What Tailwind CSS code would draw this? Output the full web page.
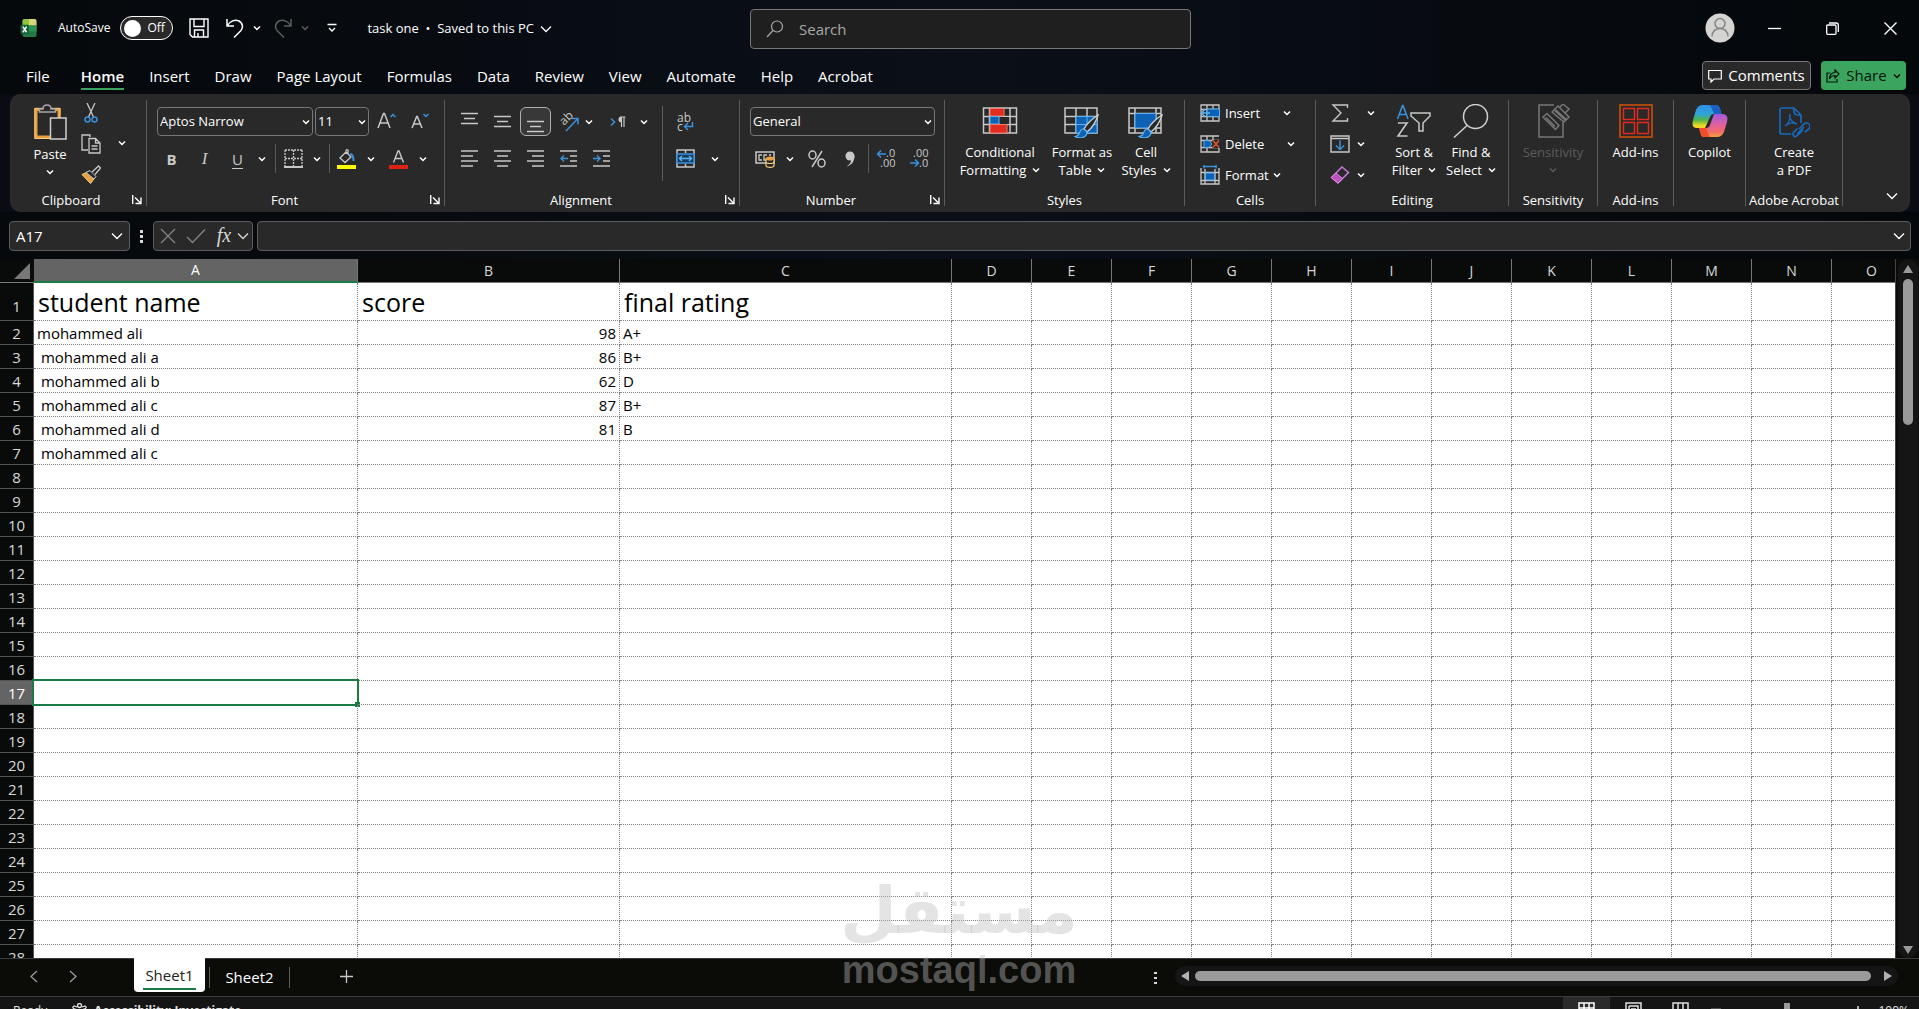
<!DOCTYPE html>
<html lang="en">
<head>
    <meta charset="UTF-8">
    <meta name="viewport" content="width=device-width, initial-scale=1.0">
    <title>task one - Excel</title>
    <script src="https://cdn.jsdelivr.net/npm/@tailwindcss/browser@4"></script>
</head>
<body class="h-screen overflow-hidden bg-[#090d13] font-['Open_Sans','Noto_Sans',sans-serif] text-[13px] text-white">

    <!-- Shared icons -->
    <svg class="hidden">
        <symbol id="chev" viewBox="0 0 8 8"><path d="M1 2.5 4 5.5 7 2.5" fill="none" stroke="currentColor" stroke-width="1.5"/></symbol>
        <symbol id="chev-lg" viewBox="0 0 12 12"><path d="M1 3.5 6 8.5 11 3.5" fill="none" stroke="currentColor" stroke-width="1.3"/></symbol>
        <symbol id="launch" viewBox="0 0 10 10"><path d="M.7 0V9M3 2.5 8 7.5M9 2.5V8.5H3.5" fill="none" stroke="currentColor" stroke-width="1.4"/></symbol>
        <symbol id="brush" viewBox="0 0 26 26"><path d="M24 1C18 5 12 11 10 15l3 3C18 14 22 8 24 1z" fill="#292929" stroke="#d0d0d0" stroke-width="1.4"/><path d="M10 15c-4 0-4 3-5 5-.5 1.500-2 2-4 2.500 4 2.500 12 2 12-4.500z" fill="#0d62b8" stroke="#5fb2ee" stroke-width="1.2"/></symbol>
    </svg>

    <div class="flex h-[calc(100vh+15px)] flex-col">

        <!-- Title bar -->
        <header class="grid h-[56px] shrink-0 grid-cols-[750px_441px_1fr] bg-linear-to-r from-[#05090c] via-[#0b0f18] to-[#04080b]">
            <div class="flex items-center pl-5">
                <svg class="size-[18px]" viewBox="0 0 18 19"><path d="M4 0H9V9H2V2Q2 0 4 0z" fill="#8cc63f"/><path d="M9 0H15Q17 0 17 2V7H9z" fill="#d8d67a"/><path d="M2 7H17V17Q17 19 15 19H4Q2 19 2 17z" fill="#1f7a45"/><path d="M9 7H17V13H9z" fill="#2b9355"/><rect y="6" width="9" height="10" rx="1.500" fill="#15603a"/><path d="M2.500 8 6.500 14M6.500 8 2.500 14" stroke="#fff" stroke-width="1.600"/></svg>
                <label for="autosave" class="ml-5 text-[12px]">AutoSave</label>
                <span class="relative ml-[10px] flex h-6 w-[53px] items-center">
                    <input id="autosave" type="checkbox" class="absolute inset-0 appearance-none rounded-full border border-white bg-[#292929]">
                    <span class="pointer-events-none relative ml-1 size-[17px] rounded-full bg-white"></span>
                    <span class="pointer-events-none relative ml-1.5 text-[12px]">Off</span>
                </span>
                <button aria-label="Save" class="ml-4"><svg class="size-5" viewBox="0 0 20 20" fill="none" stroke="#fff" stroke-width="1.400"><path d="M1 1H19V19H3.500L1 16.500zM5 1V8.500H15V1M5.500 19V12H14.500V19M9 15V19"/></svg></button>
                <button aria-label="Undo" class="ml-4"><svg class="size-5" viewBox="0 0 20 20" fill="none" stroke="#fff" stroke-width="1.500"><path d="M2 1V8H9M2 8C5 3 10 1 14 3c4 2 4.500 7 1.500 10L9 19.500"/></svg></button>
                <button aria-label="Undo options" class="ml-2"><svg class="size-2"><use href="#chev"/></svg></button>
                <button aria-label="Redo" class="ml-3 text-[#5c5c5c]"><svg class="size-5" viewBox="0 0 20 20" fill="none" stroke="currentColor" stroke-width="1.500"><path d="M18 1V8H11M18 8C15 3 10 1 6 3 2 5 1.500 10 4.500 13L11 19.500"/></svg></button>
                <button aria-label="Redo options" class="ml-2 text-[#5c5c5c]"><svg class="size-2"><use href="#chev"/></svg></button>
                <button aria-label="Customize toolbar" class="ml-[18px]"><svg class="size-[10px]" viewBox="0 0 10 10" fill="none" stroke="#fff" stroke-width="1.400"><path d="M.5 1.500H9.500M2 5 5 8 8 5"/></svg></button>
                <button class="mt-0.5 ml-[30px] flex items-center gap-1.5">task one&nbsp; •&nbsp; Saved to this PC <svg class="size-3"><use href="#chev-lg"/></svg></button>
            </div>
            <div class="mt-[9px] flex h-10 items-center gap-[15px] rounded border border-[#777] bg-[#1f1f1f] px-[15px]">
                <svg class="size-[18px] shrink-0" viewBox="0 0 18 18" fill="none" stroke="#aaa" stroke-width="1.200"><circle cx="11" cy="6.500" r="5.500"/><path d="M7 10.500 1 17"/></svg>
                <input type="text" aria-label="Search" placeholder="Search" class="w-full bg-transparent text-[15px] outline-none placeholder:text-[#a8a8a8]">
            </div>
            <div class="flex items-center justify-end pr-[22px]">
                <button aria-label="Account"><svg class="size-[30px]" viewBox="0 0 30 30" fill="none" stroke="#858585" stroke-width="1.500"><circle cx="15" cy="15" r="14.500" fill="#d4d4d2" stroke="none"/><circle cx="15" cy="10.500" r="5"/><path d="M7 23.500c0-5 3.500-8 8-8s8 3 8 8"/></svg></button>
                <button aria-label="Minimize" class="ml-[33px]"><svg class="size-[13px]" viewBox="0 0 13 13"><path d="M0 6.500H13" stroke="#fff" stroke-width="1.300"/></svg></button>
                <button aria-label="Restore" class="ml-[45px]"><svg class="size-[13px]" viewBox="0 0 13 13" fill="none" stroke="#fff" stroke-width="1.300"><rect x=".7" y="3" width="9.300" height="9.300" rx="1"/><path d="M3 1H10Q12.300 1 12.300 3V10"/></svg></button>
                <button aria-label="Close" class="ml-[45px]"><svg class="size-[13px]" viewBox="0 0 13 13"><path d="M.5.5 12.500 12.500M12.500.5.5 12.500" stroke="#fff" stroke-width="1.400"/></svg></button>
            </div>
        </header>

        <!-- Ribbon tabs -->
        <nav class="flex h-[38px] shrink-0 items-start justify-between bg-linear-to-r from-[#05090c] via-[#0b0f18] to-[#04080b] pr-[13px] pl-[26px] text-[15px]">
            <div class="flex gap-[25px] pt-2 leading-6">
                <a href="#" class="mr-1.5">File</a>
                <a href="#" class="flex flex-col font-semibold">Home<span class="h-0.5 bg-[#3ba55f]"></span></a>
                <a href="#">Insert</a>
                <a href="#">Draw</a>
                <a href="#">Page Layout</a>
                <a href="#">Formulas</a>
                <a href="#">Data</a>
                <a href="#">Review</a>
                <a href="#">View</a>
                <a href="#">Automate</a>
                <a href="#">Help</a>
                <a href="#">Acrobat</a>
            </div>
            <div class="flex gap-[10px] pt-[5px]">
                <button class="flex h-[29px] w-[109px] items-center justify-center gap-1.5 rounded border border-[#777] bg-[#292929]"><svg class="size-[14px]" viewBox="0 0 14 14" fill="none" stroke="#fff" stroke-width="1.200"><path d="M.7 1.500H13.300V10H6L3 13V10H.7z"/></svg>Comments</button>
                <button class="flex h-[29px] w-[85px] items-center justify-center gap-1.5 rounded bg-[#3ba55f] text-[#06140b]"><svg class="size-[14px]" viewBox="0 0 14 14" fill="none" stroke="currentColor" stroke-width="1.200"><path d="M4 4H1V13H11V10M9 1 13 5 9 9V6.500C6 6.500 4.500 8 3.500 10 3.500 6 5.500 3.500 9 3.500z"/></svg>Share<svg class="size-2"><use href="#chev"/></svg></button>
            </div>
        </nav>

        <!-- Ribbon -->
        <div class="mr-[9px] ml-[10px] flex h-[118px] shrink-0 rounded-[10px] bg-[#292929] py-1.5 leading-[18px]">

            <section class="flex w-[137px] flex-col justify-between border-r border-[#5c5c5c]">
                <div class="flex pl-4">
                    <button class="flex w-12 flex-col items-center pt-1">
                        <svg class="h-[36px] w-[33px]" viewBox="0 0 33 36" fill="none"><path d="M2 5.500H25V33H2z" stroke="#e9a03f" stroke-width="3"/><path d="M.8 4.300H26V34.500H.8z" stroke="#f5cd82" stroke-width="1"/><path d="M5.500 8H21.500V5H17Q17 1 13 1T9 5H5.500z" fill="#292929" stroke="#a8a8a8" stroke-width="1.500"/><path d="M16.500 14H32V35H16.500z" fill="#292929" stroke="#d0d0d0" stroke-width="1.500"/></svg>
                        <span class="mt-[5px]">Paste</span>
                        <svg class="mt-[5px] size-2"><use href="#chev"/></svg>
                    </button>
                    <div class="ml-[5px] flex w-6 flex-col items-center gap-[11px] pt-[3px]">
                        <button aria-label="Cut"><svg class="h-5 w-[14px]" viewBox="0 0 14 20" fill="none" stroke="#c8c8c8" stroke-width="1.300"><path d="M3 0 9.500 14M11 0 4.500 14"/><g stroke="#3a90da" stroke-width="1.500"><circle cx="3.500" cy="16.500" r="2.500"/><circle cx="10.500" cy="16.500" r="2.500"/></g></svg></button>
                        <button aria-label="Copy"><svg class="size-5" viewBox="0 0 20 20" fill="none" stroke="#c8c8c8" stroke-width="1.300"><path d="M7 16H1V1H9V3M8 4.500H14.500L19 9V19H8zM14.500 4.500V9H19M10.500 12H16.500M10.500 15H16.500"/></svg></button>
                        <button aria-label="Format Painter"><svg class="size-5" viewBox="0 0 20 20"><path d="M1 9.500 8.500 6 14.500 12 9.500 18.500z" fill="#e9a03f" stroke="#f5cd82"/><path d="M5 7.500 9 5.500 15 11.500 13 14z" fill="#292929" stroke="#c8c8c8"/><path d="M11 7 17.500 1 19.500 3 14 9.500" fill="#292929" stroke="#c8c8c8" stroke-width="1.300"/></svg></button>
                    </div>
                    <button aria-label="Copy options" class="ml-[15px]"><svg class="size-2"><use href="#chev"/></svg></button>
                </div>
                <div class="flex h-3 items-center"><span class="flex-1 text-center">Clipboard</span><button aria-label="Clipboard settings" class="mr-1"><svg class="size-[10px]"><use href="#launch"/></svg></button></div>
            </section>

            <section class="flex w-[298px] flex-col justify-between border-r border-[#5c5c5c]">
                <div class="flex flex-col gap-2 pt-[7px] pl-2">
                    <div class="flex items-center pl-0.5">
                        <div class="relative mr-0.5 h-[29px] w-[156px]">
                            <select aria-label="Font" class="size-full appearance-none rounded border border-[#777] bg-[#292929] pb-0.5 pl-0.5"><option>Aptos Narrow</option></select>
                            <svg class="pointer-events-none absolute top-[11px] right-[3px] size-2"><use href="#chev"/></svg>
                        </div>
                        <div class="relative h-[29px] w-[54px]">
                            <select aria-label="Font size" class="size-full appearance-none rounded border border-[#777] bg-[#292929] pb-0.5 pl-0.5"><option>11</option></select>
                            <svg class="pointer-events-none absolute top-[11px] right-[3px] size-2"><use href="#chev"/></svg>
                        </div>
                        <button aria-label="Increase font size" class="ml-2"><svg class="size-5" viewBox="0 0 20 20" fill="none" stroke="#c8c8c8" stroke-width="1.500"><path d="M1 16 6.500 1.500H7.500L13 16M3 11H11"/><path d="M13.500 5 16 2.500 18.500 5" stroke="#3a90da"/></svg></button>
                        <button aria-label="Decrease font size" class="ml-[14px]"><svg class="size-5" viewBox="0 0 20 20" fill="none" stroke="#c8c8c8" stroke-width="1.500"><path d="M1 16 5.700 4.500H6.300L11 16M3 12H9"/><path d="M12.500 2 15 4.500 17.500 2" stroke="#3a90da"/></svg></button>
                    </div>
                    <div class="flex h-[29px] items-center text-[#c8c8c8]">
                        <button class="w-[33px] text-[15px] font-bold">B</button>
                        <button class="w-[33px] font-['Liberation_Serif',serif] text-[17px] italic">I</button>
                        <button class="w-[33px] text-[15px] underline underline-offset-3">U</button>
                        <button aria-label="Underline options" class="flex w-4 justify-center text-white"><svg class="size-2"><use href="#chev"/></svg></button>
                        <span class="mx-[5px] h-full w-px bg-[#5c5c5c]"></span>
                        <button aria-label="Borders" class="flex w-6 justify-center"><svg class="size-[19px]" viewBox="0 0 19 19" fill="none" stroke="#c8c8c8" stroke-width="1.300"><path d="M1 1H18M1 9.500H18M1 1V17M9.500 1V17M18 1V17" stroke-dasharray="2 1"/><path d="M0 18H19" stroke-width="2"/></svg></button>
                        <button aria-label="Border options" class="flex w-6 justify-center text-white"><svg class="size-2"><use href="#chev"/></svg></button>
                        <span class="h-full w-px bg-[#5c5c5c]"></span>
                        <button aria-label="Fill color" class="flex w-8 justify-center"><svg class="h-5 w-[19px]" viewBox="0 0 19 20"><path d="M3 9 9 3 14 8 8 13.500zM9 5V2Q9 0 11 1V5" fill="none" stroke="#c8c8c8" stroke-width="1.300"/><path d="M13 5Q16.500 5 16.500 12" fill="none" stroke="#3a90da" stroke-width="2"/><path d="M0 16H19V20H0z" fill="#ff0"/></svg></button>
                        <button aria-label="Fill color options" class="flex w-[18px] justify-center text-white"><svg class="size-2"><use href="#chev"/></svg></button>
                        <button aria-label="Font color" class="flex w-9 justify-center"><svg class="h-5 w-[19px]" viewBox="0 0 19 20"><path d="M4.500 13.500 9 2H10L14.500 13.500M6.500 9.500H12.500" fill="none" stroke="#c8c8c8" stroke-width="1.400"/><path d="M0 16H19V20H0z" fill="#dd2211"/></svg></button>
                        <button aria-label="Font color options" class="flex w-[14px] justify-center text-white"><svg class="size-2"><use href="#chev"/></svg></button>
                    </div>
                </div>
                <div class="flex h-3 items-center"><span class="flex-1 pr-2 text-center">Font</span><button aria-label="Font settings" class="mr-1"><svg class="size-[10px]"><use href="#launch"/></svg></button></div>
            </section>

            <section class="flex w-[295px] flex-col justify-between border-r border-[#5c5c5c]">
                <div class="flex pl-2 text-[#c8c8c8]">
                    <div class="flex flex-col gap-2 pt-[7px]">
                        <div class="flex h-[29px] items-center">
                            <button aria-label="Top align" class="flex w-[33px] justify-center"><svg class="h-[22px] w-[17px]" viewBox="0 0 17 22" stroke="currentColor" stroke-width="1.500"><path d="M0 2.500H17M3 7.500H14M0 12.500H17"/></svg></button>
                            <button aria-label="Middle align" class="flex w-[33px] justify-center"><svg class="h-[22px] w-[17px]" viewBox="0 0 17 22" stroke="currentColor" stroke-width="1.500"><path d="M0 5.500H17M3 10.500H14M0 15.500H17"/></svg></button>
                            <button aria-label="Bottom align" class="mx-px flex h-[29px] w-[31px] items-center justify-center rounded-md border border-[#b0b0b0] bg-[#383838]"><svg class="h-[22px] w-[17px]" viewBox="0 0 17 22" stroke="currentColor" stroke-width="1.500"><path d="M0 10.500H17M3 15.500H14M0 20.500H17"/></svg></button>
                            <button aria-label="Orientation" class="flex w-[33px] justify-center"><svg class="h-[22px] w-5 overflow-visible" viewBox="0 0 20 22" fill="none"><text transform="translate(5 15) rotate(-45)" font-size="12" fill="#c8c8c8">ab</text><path d="M7 20 18.500 8M13 7.500H19V13.500" stroke="#3a90da" stroke-width="1.500"/></svg></button>
                            <button aria-label="Orientation options" class="text-white"><svg class="size-2"><use href="#chev"/></svg></button>
                            <button aria-label="Text direction" class="ml-3 flex w-7 items-center"><svg class="ml-[5px] size-4" viewBox="0 0 16 16" fill="none"><path d="M1 4.500 4.500 8 1 11.500" stroke="#3a90da" stroke-width="1.600"/><path d="M11.500 3V13M14 3V13M15.500 3H10.500" stroke="#c8c8c8" stroke-width="1.200"/><path d="M11.500 2.500A3 3 0 0 0 11.500 8.500z" fill="#c8c8c8"/></svg></button>
                            <button aria-label="Text direction options" class="ml-[7px] text-white"><svg class="size-2"><use href="#chev"/></svg></button>
                        </div>
                        <div class="flex h-[29px] items-center">
                            <button aria-label="Align left" class="flex w-[33px] justify-center"><svg class="size-[17px]" viewBox="0 0 17 17" stroke="currentColor" stroke-width="1.500"><path d="M0 1H17M0 6H12M0 11H17M0 16H12"/></svg></button>
                            <button aria-label="Center" class="flex w-[33px] justify-center"><svg class="size-[17px]" viewBox="0 0 17 17" stroke="currentColor" stroke-width="1.500"><path d="M0 1H17M3 6H14M0 11H17M3 16H14"/></svg></button>
                            <button aria-label="Align right" class="flex w-[33px] justify-center"><svg class="size-[17px]" viewBox="0 0 17 17" stroke="currentColor" stroke-width="1.500"><path d="M0 1H17M5 6H17M0 11H17M5 16H17"/></svg></button>
                            <button aria-label="Decrease indent" class="flex w-[33px] justify-center"><svg class="size-[17px]" viewBox="0 0 17 17" fill="none" stroke="currentColor" stroke-width="1.500"><path d="M0 1H17M10 6H17M10 11H17M0 16H17"/><path d="M8 8.500H1M4 5.500 1 8.500 4 11.500" stroke="#3a90da"/></svg></button>
                            <button aria-label="Increase indent" class="flex w-[33px] justify-center"><svg class="size-[17px]" viewBox="0 0 17 17" fill="none" stroke="currentColor" stroke-width="1.500"><path d="M0 1H17M10 6H17M10 11H17M0 16H17"/><path d="M0 8.500H7M4 5.500 7 8.500 4 11.500" stroke="#3a90da"/></svg></button>
                        </div>
                    </div>
                    <span class="mt-1.5 ml-auto h-[75px] w-px bg-[#5c5c5c]"></span>
                    <div class="flex w-[76px] flex-col gap-2 pt-[7px] pl-[11px]">
                        <button aria-label="Wrap text" class="flex h-[29px] w-7 items-center"><svg class="ml-0.5 size-5 overflow-visible" viewBox="0 0 20 20" fill="none"><text x="1" y="10" font-size="12" fill="#c8c8c8">ab</text><text x="1" y="19" font-size="12" fill="#c8c8c8">c</text><path d="M16.500 10V14.500H9M12 11 8.500 14.500 12 18" stroke="#3a90da" stroke-width="1.500"/></svg></button>
                        <div class="flex h-[29px] items-center">
                            <button aria-label="Merge and center" class="ml-0.5"><svg class="size-[19px]" viewBox="0 0 19 19" fill="none"><path d="M1 1H18V18H1zM9.500 1V4M9.500 15V18" stroke="#c8c8c8" stroke-width="1.500"/><path d="M1 5H18V14H1z" fill="#173e60" stroke="#3a90da" stroke-width="1.500"/><path d="M3 9.500H16M6 7 3.500 9.500 6 12M13 7 15.500 9.500 13 12" stroke="#5fb2ee" stroke-width="1.400"/></svg></button>
                            <button aria-label="Merge options" class="ml-4 text-white"><svg class="size-2"><use href="#chev"/></svg></button>
                        </div>
                    </div>
                </div>
                <div class="flex h-3 items-center"><span class="flex-1 pr-2 text-center">Alignment</span><button aria-label="Alignment settings" class="mr-1"><svg class="size-[10px]"><use href="#launch"/></svg></button></div>
            </section>

            <section class="flex w-[205px] flex-col justify-between border-r border-[#5c5c5c]">
                <div class="flex flex-col gap-2 pt-[7px] pl-[10px]">
                    <div class="relative h-[29px] w-[185px]">
                        <select aria-label="Number format" class="size-full appearance-none rounded border border-[#777] bg-[#292929] pb-0.5 pl-0.5"><option>General</option></select>
                        <svg class="pointer-events-none absolute top-[11px] right-[3px] size-2"><use href="#chev"/></svg>
                    </div>
                    <div class="flex h-[29px] items-center text-[#c8c8c8]">
                        <button aria-label="Accounting format" class="flex w-[30px] justify-center"><svg class="h-[18px] w-5" viewBox="0 0 20 18" fill="none"><path d="M1 2H19V13H1z" stroke="#c8c8c8" stroke-width="1.500"/><path d="M7 5H4V10H7M12 5H9V10H11M16 5H14" stroke="#c8c8c8" stroke-width="1.300"/><path d="M11 8.500V15.500C11 18 19 18 19 15.500V8.500z" fill="#292929" stroke="#f5cd82" stroke-width="1.200"/><path d="M11 12C11 14 19 14 19 12" stroke="#f5cd82" stroke-width="1.200"/><ellipse cx="15" cy="8.500" rx="4" ry="2" fill="#e9a03f"/></svg></button>
                        <button aria-label="Accounting options" class="flex w-5 justify-center text-white"><svg class="size-2"><use href="#chev"/></svg></button>
                        <button aria-label="Percent" class="flex w-[34px] justify-center"><svg class="size-[18px]" viewBox="0 0 18 18" fill="none" stroke="currentColor" stroke-width="1.500"><ellipse cx="4.500" cy="5" rx="3.500" ry="4"/><ellipse cx="13.500" cy="13" rx="3.500" ry="4"/><path d="M14 1 4 17"/></svg></button>
                        <button aria-label="Comma style" class="flex w-8 justify-center"><svg class="size-4" viewBox="0 0 16 16"><circle cx="8" cy="5" r="4.500" fill="currentColor"/><path d="M12.500 5C12.500 11 9 14.500 4.500 15.500 8 13 9.500 11 9 8z" fill="currentColor"/></svg></button>
                        <span class="ml-0.5 h-full w-px bg-[#5c5c5c]"></span>
                        <button aria-label="Increase decimal" class="flex w-[33px] justify-center"><svg class="size-5 overflow-visible" viewBox="0 0 20 20" fill="none"><text x="10" y="8" font-size="11" fill="#c8c8c8">.0</text><text x="4" y="18" font-size="11" fill="#c8c8c8">.00</text><path d="M10 5H1.500M5 1.500 1.500 5 5 8.500" stroke="#3a90da" stroke-width="1.500"/></svg></button>
                        <button aria-label="Decrease decimal" class="flex w-[33px] justify-center"><svg class="size-5 overflow-visible" viewBox="0 0 20 20" fill="none"><text x="4" y="8" font-size="11" fill="#c8c8c8">.00</text><text x="10" y="18" font-size="11" fill="#c8c8c8">.0</text><path d="M1 14H9.500M6 10.500 9.500 14 6 17.500" stroke="#3a90da" stroke-width="1.500"/></svg></button>
                    </div>
                </div>
                <div class="flex h-3 items-center"><span class="flex-1 pr-2 text-center">Number</span><button aria-label="Number settings" class="mr-1"><svg class="size-[10px]"><use href="#launch"/></svg></button></div>
            </section>

            <section class="flex w-[240px] flex-col justify-between border-r border-[#5c5c5c]">
                <div class="flex pt-1 pl-[11px]">
                    <button class="flex w-[88px] flex-col items-center">
                        <svg class="h-[34px] w-[36px]" viewBox="0 0 36 34" fill="none"><path d="M1.500 4H34.500V29H1.500zM1.500 12.500H34.500M1.500 20.500H34.500M7.500 4V29M28 4V29" stroke="#c8c8c8" stroke-width="1.500"/><path d="M8 4.500H22V12H8z" fill="#e02b1d" stroke="#f07a72"/><path d="M8 12.500H17V20H8z" fill="#0d62b8" stroke="#5fb2ee"/><path d="M18 13H27V20H18z" fill="#292929"/><path d="M8 20.500H25V29H8z" fill="#e02b1d" stroke="#f07a72"/></svg>
                        <span class="mt-[5px]">Conditional</span>
                        <span class="flex items-center gap-1.5">Formatting <svg class="size-2"><use href="#chev"/></svg></span>
                    </button>
                    <button class="flex w-[76px] flex-col items-center">
                        <svg class="h-[34px] w-[36px]" viewBox="0 0 36 34" fill="none"><path d="M1 4H33V29H1zM1 12.500H33M1 20.500H33M12 4V29M23 4V29" stroke="#c8c8c8" stroke-width="1.500"/><path d="M12 12.500H33V29H12z" fill="#0d62b8" stroke="#5fb2ee"/><path d="M12 20.500H33M23 12.500V29" stroke="#5fb2ee"/><use href="#brush" x="10" y="10" width="26" height="26"/></svg>
                        <span class="mt-[5px] whitespace-nowrap">Format as</span>
                        <span class="flex items-center gap-1.5">Table <svg class="size-2"><use href="#chev"/></svg></span>
                    </button>
                    <button class="flex w-[52px] flex-col items-center">
                        <svg class="h-[34px] w-[36px]" viewBox="0 0 36 34" fill="none"><path d="M1 4H33V29H1zM1 9.500H33M1 24H33M7 4V29M28 4V29" stroke="#c8c8c8" stroke-width="1.500"/><path d="M7 9.500H28V24H7z" fill="#0d62b8" stroke="#5fb2ee"/><use href="#brush" x="10" y="10" width="26" height="26"/></svg>
                        <span class="mt-[5px]">Cell</span>
                        <span class="flex items-center gap-1.5">Styles <svg class="size-2"><use href="#chev"/></svg></span>
                    </button>
                </div>
                <div class="h-3 text-center leading-3">Styles</div>
            </section>

            <section class="flex w-[131px] flex-col justify-between border-r border-[#5c5c5c]">
                <div class="flex flex-col gap-[11px] pt-[3px] pl-[15px]">
                    <button class="flex h-5 items-center"><svg class="h-[18px] w-5" viewBox="0 0 20 18" fill="none"><path d="M1 1H19V17H1zM1 5.500H19M1 12.500H19M7 1V17M13 1V17" stroke="#c8c8c8" stroke-width="1.300"/><path d="M7 5H19.500V12.500H7z" fill="#0d62b8" stroke="#5fb2ee"/><path d="M10 9H1.500M5 5 1.500 9 5 13" stroke="#5fb2ee" stroke-width="1.500"/></svg><span class="w-[60px] pl-[5px] text-left">Insert</span><svg class="ml-[3px] size-2"><use href="#chev"/></svg></button>
                    <button class="flex h-5 items-center"><svg class="h-[18px] w-5" viewBox="0 0 20 18" fill="none"><path d="M12 17H1V1H19M1 5.500H19M1 12.500H19M7 1V17M13 1V5M19 13V17H12" stroke="#c8c8c8" stroke-width="1.300"/><path d="M4 5.500H9L12 9 9 12.500H4z" fill="#0d62b8" stroke="#5fb2ee"/><path d="M12.500 5H20V13H12.500z" fill="#292929"/><path d="M13 5.500 19 12.500M19 5.500 13 12.500" stroke="#e8552d" stroke-width="1.500"/></svg><span class="w-[60px] pl-[5px] text-left">Delete</span><svg class="ml-[7px] size-2"><use href="#chev"/></svg></button>
                    <button class="flex h-5 items-center gap-1"><svg class="size-5" viewBox="0 0 20 20" fill="none"><path d="M1 3V19H19V3M1 7.500H19M1 15.500H19M5 4V19M15 4V19" stroke="#c8c8c8" stroke-width="1.300"/><path d="M5.500 8H14.500V15H5.500z" fill="#0d62b8" stroke="#5fb2ee"/><path d="M3 1.500H17M4 0V3.500M16 0V3.500" stroke="#3a90da" stroke-width="1.400"/></svg><span class="pl-px">Format</span><svg class="size-2"><use href="#chev"/></svg></button>
                </div>
                <div class="h-3 text-center leading-3">Cells</div>
            </section>

            <section class="flex w-[193px] flex-col justify-between border-r border-[#5c5c5c]">
                <div class="flex pl-[14px]">
                    <div class="flex w-[58px] flex-col gap-[11px] pt-[3px]">
                        <div class="flex h-5 items-center gap-[17px]">
                            <button aria-label="AutoSum"><svg class="h-[18px] w-5" viewBox="0 0 20 18" fill="none" stroke="#c8c8c8" stroke-width="1.400"><path d="M17.500 4V1H3L11 9 3 17H17.500V14"/></svg></button>
                            <button aria-label="AutoSum options"><svg class="size-2"><use href="#chev"/></svg></button>
                        </div>
                        <div class="flex h-5 items-center gap-[7px]">
                            <button aria-label="Fill"><svg class="h-[18px] w-5" viewBox="0 0 20 18" fill="none"><path d="M1 1H19V17H1zM1 3.500H19" stroke="#c8c8c8" stroke-width="1.400"/><path d="M10 5.500V14.500M6 10.500 10 14.500 14 10.500" stroke="#3a90da" stroke-width="1.500"/></svg></button>
                            <button aria-label="Fill options"><svg class="size-2"><use href="#chev"/></svg></button>
                        </div>
                        <div class="flex h-5 items-center gap-[7px]">
                            <button aria-label="Clear"><svg class="size-5" viewBox="0 0 20 20" fill="none"><path d="M1.500 12.500 12 2 18.500 7.500 8 18z" stroke="#c678dd" stroke-width="1.500"/><path d="M1.500 12.500 6 8 12.500 13.500 8 18z" fill="#c04fc0" stroke="#d98ae0"/></svg></button>
                            <button aria-label="Clear options"><svg class="size-2"><use href="#chev"/></svg></button>
                        </div>
                    </div>
                    <button class="flex w-[52px] flex-col items-center pt-1">
                        <svg class="h-[34px] w-[36px]" viewBox="0 0 36 34" fill="none"><path d="M1.500 15 6.500 1.500H7L12 15M3.500 10.500H10" stroke="#3a90da" stroke-width="1.600"/><path d="M2 19H11L2 32H11.500" stroke="#c8c8c8" stroke-width="1.600"/><path d="M15 9H34V12L27 19V27H23V19L15 12z" stroke="#c8c8c8" stroke-width="1.500"/></svg>
                        <span class="mt-[5px] whitespace-nowrap">Sort &amp;</span>
                        <span class="flex items-center gap-1.5">Filter <svg class="size-2"><use href="#chev"/></svg></span>
                    </button>
                    <button class="ml-1 flex w-[54px] flex-col items-center pt-1">
                        <svg class="h-[34px] w-[36px]" viewBox="0 0 36 34" fill="none" stroke="#d0d0d0" stroke-width="1.500"><circle cx="22.500" cy="12.500" r="12"/><path d="M14 21.500 1 33.500"/></svg>
                        <span class="mt-[5px] whitespace-nowrap">Find &amp;</span>
                        <span class="flex items-center gap-1.5">Select <svg class="size-2"><use href="#chev"/></svg></span>
                    </button>
                </div>
                <div class="h-3 text-center leading-3">Editing</div>
            </section>

            <section class="flex w-[89px] flex-col justify-between border-r border-[#5c5c5c]">
                <button disabled class="flex flex-col items-center pt-1 text-[#5c5c5c]">
                    <svg class="h-[34px] w-[36px]" viewBox="0 0 36 34" fill="none" stroke="#777" stroke-width="1.500"><path d="M19 1H4V33H28V18"/><path d="M8 13 12 9.500 24 21.500 20.500 25.500zM11 13.500 20 22.500" /><path d="M17 8 23 2 34 13 29 18zM24 4 28 0 34 5 30 9" fill="#292929"/><path d="M20 6 31 16" stroke-width="2.500"/></svg>
                    <span class="mt-[5px]">Sensitivity</span>
                    <svg class="mt-[5px] size-2"><use href="#chev"/></svg>
                </button>
                <div class="h-3 text-center leading-3">Sensitivity</div>
            </section>

            <section class="flex w-[76px] flex-col justify-between border-r border-[#5c5c5c]">
                <button class="flex flex-col items-center pt-1">
                    <svg class="size-[34px]" viewBox="0 0 34 34" fill="none"><path d="M1 1H33V33H1z" stroke="#a8480f" stroke-width="2"/><path d="M4.500 4.500H15.500V15.500H4.500zM18.500 4.500H29.500V15.500H18.500zM4.500 18.500H15.500V29.500H4.500zM18.500 18.500H29.500V29.500H18.500z" stroke="#e02b1d" stroke-width="1.500"/></svg>
                    <span class="mt-[5px]">Add-ins</span>
                </button>
                <div class="h-3 text-center leading-3">Add-ins</div>
            </section>

            <section class="flex w-[72px] flex-col border-r border-[#5c5c5c]">
                <button class="flex flex-col items-center pt-1">
                    <svg class="h-[34px] w-[36px]" viewBox="0 0 36 34">
                        <defs>
                            <linearGradient id="cpA" x1="0" y1="0" x2="0" y2="1"><stop offset="0" stop-color="#2f8fe6"/><stop offset=".4" stop-color="#2fa4d8"/><stop offset=".65" stop-color="#4fb648"/><stop offset=".9" stop-color="#f5d824"/></linearGradient>
                            <linearGradient id="cpB" x1="0" y1="0" x2="0" y2="1"><stop offset="0" stop-color="#a35ae0"/><stop offset=".5" stop-color="#e4609a"/><stop offset=".8" stop-color="#f07060"/><stop offset="1" stop-color="#f0a040"/></linearGradient>
                        </defs>
                        <path d="M17 1H24Q27 1 28 5L29.500 10H22Q19 10 18 13L13 24H5Q-1 24 1 16L4 6Q6 1 11 1z" fill="url(#cpA)"/>
                        <path d="M18 1H24Q27 1 28 5L29.500 10H22L20 5Q19 2 17 1z" fill="#1c5fc4"/>
                        <path d="M19 33H12Q9 33 8.500 29L7 24H14Q17 24 18 21L22 10H30Q37 10 35 18L32 28Q30 33 25 33z" fill="url(#cpB)"/>
                        <path d="M18 33H12Q9 33 8.500 29L7 24H14L16 29Q17 32 18 33z" fill="#f04e2a"/>
                    </svg>
                    <span class="mt-[5px]">Copilot</span>
                </button>
            </section>

            <section class="flex w-[97px] flex-col justify-between border-r border-[#5c5c5c]">
                <button class="flex flex-col items-center pt-1">
                    <svg class="h-[34px] w-[32px]" viewBox="0 0 32 34" fill="none" stroke="#1769bd" stroke-width="1.700"><path d="M13 30H4Q2 30 2 28V6Q2 4 4 4H16L23 11V19M16 4V7Q16 11 20 11H23"/><path d="M7 22C10 20 13 15 12 11 11 9 11 18 19 20 15 18 10 19 7 22z" stroke-width="1.400"/><path d="M21 25 26 20Q29 18 31 20T31 25L27 28M25 26 20 31Q17 34 15.500 31.500T17 27L19.500 24.500M19 30 26 23"/></svg>
                    <span class="mt-[5px]">Create</span>
                    <span>a PDF</span>
                </button>
                <div class="h-3 text-center leading-3 whitespace-nowrap">Adobe Acrobat</div>
            </section>

            <button aria-label="Ribbon display options" class="mb-1 ml-auto flex items-end pr-3"><svg class="size-3"><use href="#chev-lg"/></svg></button>
        </div>

        <!-- Formula bar -->
        <div class="flex h-[47px] shrink-0 items-start bg-linear-to-r from-[#05090c] via-[#0b0f18] to-[#04080b] pt-[9px] pr-2 pl-[9px]">
            <div class="flex h-[30px] w-[121px] items-center rounded border border-[#5c5c5c] bg-[#292929] pr-1.5 pl-1.5">
                <input type="text" aria-label="Name box" value="A17" class="w-full bg-transparent text-[15px] outline-none">
                <svg class="size-3 shrink-0"><use href="#chev-lg"/></svg>
            </div>
            <svg class="mx-[10px] h-[30px] w-[3px]" viewBox="0 0 3 30" fill="#d8d8d8"><path d="M0 9H3V12H0zM0 14H3V17H0zM0 19H3V22H0z"/></svg>
            <div class="flex h-[30px] w-[100px] items-center rounded border border-[#5c5c5c] bg-[#292929] pl-1.5 text-[#d8d8d8]">
                <button aria-label="Cancel"><svg class="size-4" viewBox="0 0 16 16" stroke="#858585" stroke-width="1.300"><path d="M1 1 15 15M15 1 1 15"/></svg></button>
                <button aria-label="Enter" class="ml-[10px]"><svg class="h-4 w-5" viewBox="0 0 20 16" fill="none" stroke="#858585" stroke-width="1.300"><path d="M1 9 6.500 14.500 19 1.500"/></svg></button>
                <button aria-label="Insert function" class="ml-[9px] w-[18px] pb-0.5 font-['Liberation_Serif',serif] text-[20px] leading-5 italic">fx</button>
                <svg class="ml-1 size-3"><use href="#chev-lg"/></svg>
            </div>
            <div class="ml-1 flex h-[30px] flex-1 items-center rounded border border-[#5c5c5c] bg-[#292929] pr-[5px] pl-2">
                <input type="text" aria-label="Formula bar" class="w-full bg-transparent outline-none">
                <svg class="size-3 shrink-0"><use href="#chev-lg"/></svg>
            </div>
        </div>

        <!-- Worksheet -->
        <main class="flex min-h-0 flex-1 bg-[#0b0b08]">
            <div class="min-w-0 flex-1 overflow-hidden border-r border-[#444] bg-white text-[15px] text-black">
                <table class="w-max table-fixed border-separate border-spacing-0">
                    <colgroup id="cols"></colgroup>
                    <thead><tr id="head"></tr></thead>
                    <tbody id="rows"></tbody>
                </table>
            </div>
            <div class="ml-0.5 flex w-5 flex-col items-center rounded-full bg-[#151515]">
                <svg class="mt-1.5 h-2 w-[10px]" viewBox="0 0 10 8"><path d="M5 0 10 8H0z" fill="#9a9a9a"/></svg>
                <div class="mt-1.5 h-[146px] w-[10px] rounded-full bg-[#9a9a9a]"></div>
                <svg class="mt-auto mb-1 h-2 w-[10px]" viewBox="0 0 10 8"><path d="M5 8 10 0H0z" fill="#9a9a9a"/></svg>
            </div>
            <span class="w-px"></span>
        </main>

        <!-- Sheet tabs -->
        <div class="flex h-[38px] shrink-0 items-start border-t border-[#3c3c3c] bg-[#0b0b08] text-[15px]">
            <button aria-label="Previous sheet" class="mt-[11px] ml-[30px]"><svg class="h-[13px] w-2" viewBox="0 0 8 13" fill="none" stroke="#9a9a9a" stroke-width="1.300"><path d="M7 1 1 6.500 7 12"/></svg></button>
            <button aria-label="Next sheet" class="mt-[11px] ml-[31px]"><svg class="h-[13px] w-2" viewBox="0 0 8 13" fill="none" stroke="#9a9a9a" stroke-width="1.300"><path d="M1 1 7 6.500 1 12"/></svg></button>
            <button class="-mt-px ml-[57px] h-[34px] w-[71px] rounded-b bg-white px-[9px] pt-1 text-[#222]"><span class="block border-b-2 border-[#1a7a43] pb-px">Sheet1</span></button>
            <span class="mt-2 ml-1 h-[21px] w-px bg-[#5c5c5c]"></span>
            <button class="h-9 w-[79px]">Sheet2</button>
            <span class="mt-2 h-[21px] w-px bg-[#5c5c5c]"></span>
            <button aria-label="New sheet" class="mt-[11px] ml-[50px]"><svg class="size-[13px]" viewBox="0 0 13 13" stroke="#c8c8c8" stroke-width="1.300"><path d="M6.500 0V13M0 6.500H13"/></svg></button>
            <svg class="mt-[13px] mr-[18px] ml-auto h-3 w-[3px]" viewBox="0 0 3 12" fill="#d8d8d8"><path d="M0 0H3V2H0zM0 5H3V7H0zM0 10H3V12H0z"/></svg>
            <div class="mt-[7px] mr-[21px] flex h-5 w-[723px] items-center rounded-full bg-[#151515] px-1.5">
                <svg class="h-[10px] w-2" viewBox="0 0 8 10"><path d="M0 5 8 0V10z" fill="#b0b0b0"/></svg>
                <div class="mx-1.5 h-[10px] w-[676px] rounded-full bg-[#9a9a9a]"></div>
                <svg class="ml-auto h-[10px] w-2" viewBox="0 0 8 10"><path d="M8 5 0 0V10z" fill="#b0b0b0"/></svg>
            </div>
        </div>

        <!-- Status bar -->
        <footer class="flex h-7 shrink-0 items-center border-t border-[#3c3c3c] bg-[#151515] pr-[10px] pl-[13px] text-[12px] text-[#e0e0e0]">
            <span class="w-[59px]">Ready</span>
            <svg class="mr-[7px] size-[15px]" viewBox="0 0 15 15" fill="none" stroke="currentColor" stroke-width="1.300"><circle cx="7.500" cy="2.500" r="2"/><path d="M5 4 2 3Q0 4 1.500 5.500L5 7V10L3 14M10 4 13 3Q15 4 13.500 5.500L10 7V10L12 14"/></svg>
            <button class="font-bold">Accessibility: Investigate</button>
            <button aria-label="Normal view" class="ml-auto flex h-full w-[47px] items-center justify-center bg-[#2b2b2b]"><svg class="size-[17px]" viewBox="0 0 17 17" fill="none" stroke="#fff" stroke-width="1.500"><path d="M1 1H16V16H1zM1 6H16M1 11H16M6 1V16M11 1V16"/></svg></button>
            <button aria-label="Page layout view" class="flex w-[47px] justify-center"><svg class="size-[17px]" viewBox="0 0 17 17" fill="none" stroke="#e0e0e0" stroke-width="1.500"><path d="M1 1H16V16H1zM4 4H13V16M4 4V16M6 7H11M6 10H11"/></svg></button>
            <button aria-label="Page break preview" class="flex w-[47px] justify-center"><svg class="size-[17px]" viewBox="0 0 17 17" fill="none" stroke="#e0e0e0" stroke-width="1.500"><path d="M1 1H16V16H1zM6 1V9H1M11 1V9H16"/></svg></button>
            <button aria-label="Zoom out" class="ml-[7px]"><svg class="size-[10px]" viewBox="0 0 10 10"><path d="M0 3.500H10" stroke="#fff" stroke-width="1.500"/></svg></button>
            <input type="range" aria-label="Zoom" class="mx-[9px] h-0.5 w-[114px] appearance-none bg-[#777] [&::-webkit-slider-thumb]:h-4 [&::-webkit-slider-thumb]:w-1.5 [&::-webkit-slider-thumb]:appearance-none [&::-webkit-slider-thumb]:bg-[#9a9a9a]">
            <button aria-label="Zoom in" class="mr-[15px]"><svg class="size-[10px]" viewBox="0 0 10 10"><path d="M5 0V10M0 4H10" stroke="#fff" stroke-width="1.300"/></svg></button>
            <span>100%</span>
        </footer>
    </div>

    <!-- Watermark -->
    <div class="pointer-events-none absolute bottom-4 left-[844px] flex w-[230px] flex-col items-center text-[#bebebe]/42">
        <span lang="ar" dir="rtl" class="font-['DejaVu_Sans',sans-serif] text-[65px] leading-[72px] font-bold">مستقل</span>
        <span class="font-['Liberation_Sans',sans-serif] text-[38px] leading-[46px] font-bold">mostaql.com</span>
    </div>

    <script>
        const letters = 'ABCDEFGHIJKLMNO'.split('');
        const widths = { A: 'w-[324px]', B: 'w-[262px]', C: 'w-[332px]' };
        const data = {
            1: ['student name', 'score', 'final rating'],
            2: ['mohammed ali', '98', 'A+'],
            3: [' mohammed ali a', '86', 'B+'],
            4: [' mohammed ali b', '62', 'D'],
            5: [' mohammed ali c', '87', 'B+'],
            6: [' mohammed ali d', '81', 'B'],
            7: [' mohammed ali c', '', '']
        };
        const active = 17;

        // Column widths and letters
        let cols = '<col class="w-[34px]">';
        let head = '<th class="h-6 border-b border-[#777] bg-[#090b0b] p-0"><svg class="ml-auto mr-1 size-4" viewBox="0 0 16 16"><path d="M16 0V16H0z" fill="#777"/></svg></th>';
        letters.forEach(l => {
            cols += `<col class="${widths[l] || 'w-[80px]'}">`;
            const look = l === 'A' ? 'border-b-2 border-b-[#1a7a43] bg-[#646464] text-white' : 'border-b border-b-[#777] bg-[#090b0b] text-[#d8d8d8]';
            head += `<th class="h-6 border-r border-r-[#777] p-0 text-[14px] leading-5 font-normal ${look}">${l}</th>`;
        });
        document.getElementById('cols').innerHTML = cols;
        document.getElementById('head').innerHTML = head;

        // Rows
        let html = '';
        for (let r = 1; r <= 28; r++) {
            const height = r === 1 ? 'h-[38px] leading-7' : 'h-6 leading-[22px]';
            const text = r === 1 ? 'text-[25px] leading-8 px-1' : 'leading-[22px] px-[3px]';
            const mark = r === active ? 'bg-[#646464] text-white' : 'bg-[#090b0b] text-[#d8d8d8]';
            html += `<tr><th class="${height} border-r border-b border-[#555] p-0 align-bottom font-normal ${mark}">${r}</th>`;
            letters.forEach((l, i) => {
                const value = data[r] && data[r][i] || '';
                const align = i === 1 && r > 1 ? 'text-right' : 'text-left';
                const sel = r === active && i === 0 ? '<span class="absolute -inset-x-[2px] -inset-y-[2px] border-2 border-[#1a7a43]"></span><span class="absolute -right-[3px] -bottom-[3px] size-[5px] bg-[#1a7a43]"></span>' : '';
                html += `<td class="relative border-r border-b border-dotted border-[#808080] py-0 whitespace-pre ${text} ${align}">${value}${sel}</td>`;
            });
            html += '</tr>';
        }
        document.getElementById('rows').innerHTML = html;
    </script>

</body>
</html>
